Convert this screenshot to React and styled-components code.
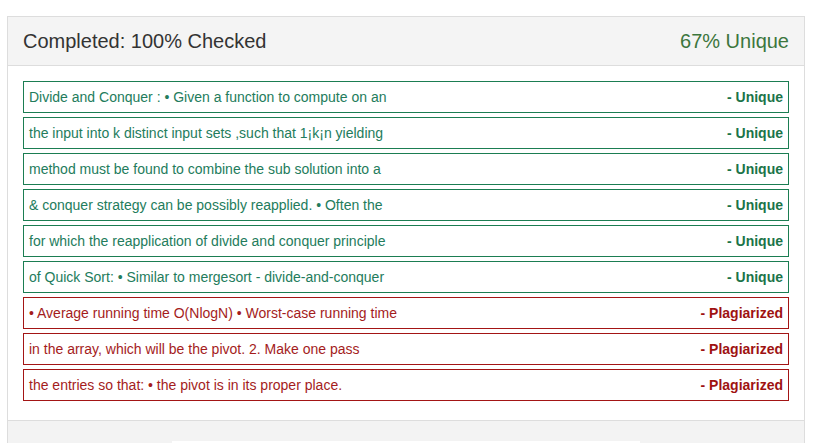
import React from 'react';
import styled, { createGlobalStyle } from 'styled-components';

const GlobalStyle = createGlobalStyle`
  body {
    margin: 0;
    background: #fff;
    font-family: "Liberation Sans", Arial, sans-serif;
  }
`;

const Page = styled.div`
  padding: 16px 14px 0 7px;
`;

const Panel = styled.div`
  border: 1px solid #dddddd;
  border-bottom: none;
  background: #fff;
`;

const PanelHeader = styled.div`
  display: flex;
  justify-content: space-between;
  align-items: center;
  height: 48px;
  padding: 0 15px;
  background: #f4f4f4;
  border-bottom: 1px solid #dddddd;
`;

const Title = styled.div`
  font-size: 20px;
  color: #333;
`;

const Score = styled.div`
  font-size: 20px;
  color: #3c763d;
`;

const PanelBody = styled.div`
  display: flex;
  flex-direction: column;
  gap: 4px;
  padding: 15px 15px 19px;
`;

const Row = styled.div`
  display: flex;
  justify-content: space-between;
  align-items: center;
  height: 30px;
  padding: 0 5px;
  border: 1px solid ${p => (p.$plag ? '#a31515' : '#1b7d52')};
  color: ${p => (p.$plag ? '#a41c1c' : '#237c5c')};
  font-size: 14px;
`;

const Label = styled.span`
  font-weight: bold;
  color: ${p => (p.$plag ? '#9e1212' : '#1b7449')};
`;

const PanelFooter = styled.div`
  display: flex;
  justify-content: center;
  padding-top: 20px;
  background: #f3f3f3;
  border-top: 1px solid #dddddd;
`;

const FooterBox = styled.div`
  width: 468px;
  height: 20px;
  background: #fff;
`;

const rows = [
  ['Divide and Conquer : • Given a function to compute on an', false],
  ['the input into k distinct input sets ,such that 1¡k¡n yielding', false],
  ['method must be found to combine the sub solution into a', false],
  ['& conquer strategy can be possibly reapplied. • Often the', false],
  ['for which the reapplication of divide and conquer principle', false],
  ['of Quick Sort: • Similar to mergesort - divide-and-conquer', false],
  ['• Average running time O(NlogN) • Worst-case running time', true],
  ['in the array, which will be the pivot. 2. Make one pass', true],
  ['the entries so that: • the pivot is in its proper place.', true],
];

export default function App() {
  return (
    <>
      <GlobalStyle />
      <Page>
        <Panel>
          <PanelHeader>
            <Title>Completed: 100% Checked</Title>
            <Score>67% Unique</Score>
          </PanelHeader>
          <PanelBody>
            {rows.map(([text, plag], i) => (
              <Row key={i} $plag={plag}>
                <span>{text}</span>
                <Label $plag={plag}>{plag ? '- Plagiarized' : '- Unique'}</Label>
              </Row>
            ))}
          </PanelBody>
          <PanelFooter>
            <FooterBox />
          </PanelFooter>
        </Panel>
      </Page>
    </>
  );
}
